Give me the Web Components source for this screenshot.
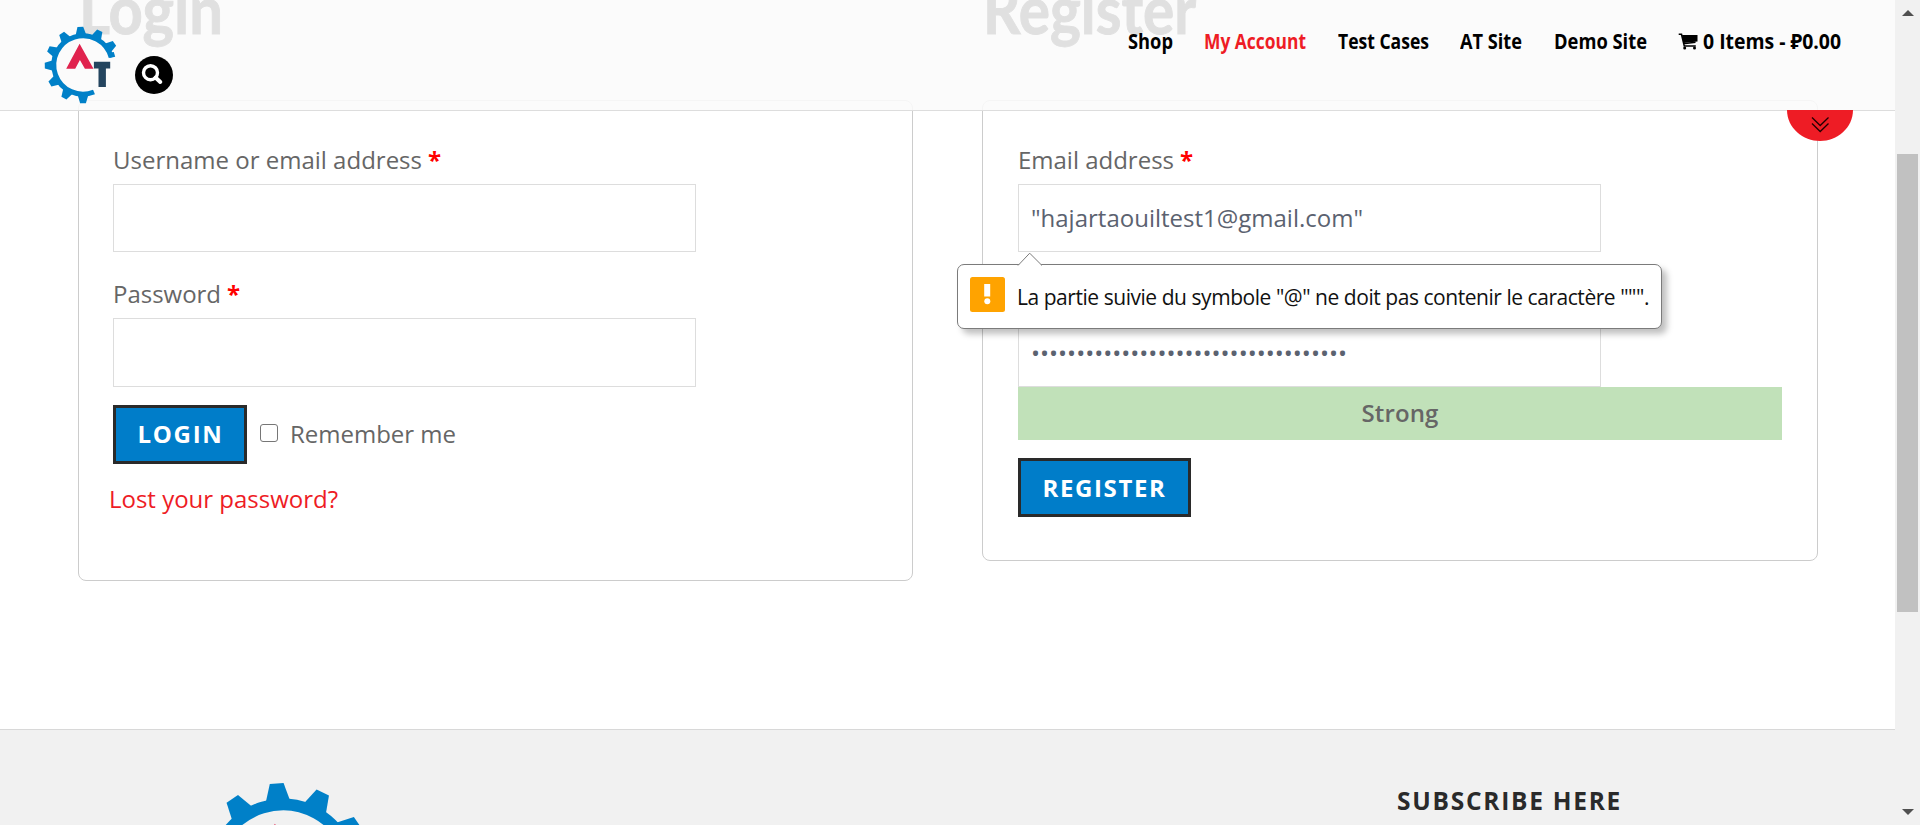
<!DOCTYPE html>
<html lang="en">
<head>
<meta charset="utf-8">
<title>My Account</title>
<style>
html,body{margin:0;height:100%;overflow:hidden;background:#fff}
body{font-family:"Open Sans","Noto Sans",sans-serif;font-size:24px;line-height:40px;color:#666}
</style>
</head>
<body>
<account-page></account-page>
<script>
const define = (name, html, init) => customElements.define(name, class extends HTMLElement {
  connectedCallback() {
    if (this.shadowRoot) return;
    const t = document.createElement('template');
    t.innerHTML = html;
    this.attachShadow({mode: 'open'}).append(t.content.cloneNode(true));
    if (init) init(this, this.shadowRoot);
  }
});

/* One line of text set to a given measure, by tracking or by horizontal scale. */
define('fit-line', `<style>:host{display:inline-block;white-space:nowrap;flex:none}span{display:inline-block;transform-origin:0 50%}</style><span><slot></slot></span>`,
  (el, root) => {
    const span = root.querySelector('span');
    const width = +el.getAttribute('width');
    const natural = span.getBoundingClientRect().width;
    el.style.width = width + 'px';
    if (el.hasAttribute('scale')) span.style.transform = `scaleX(${width / natural})`;
    else span.style.letterSpacing = (width - natural) / el.textContent.length + 'px';
  });

define('gear-logo', `<style>:host{display:block;flex:none}svg{display:block;width:100%;height:100%}</style>
<svg viewBox="-40 -40 80 80"><g id="teeth" fill="#0080c8"></g>
<path d="M28.2 -7.6A29.2 29.2 0 1 0 11 27" fill="none" stroke="#0080c8" stroke-width="5"/>
<path d="M26.5 -7l5.7 -1.3l-1.4 -4.6l-4 .5z" fill="#0080c8"/>
<path d="M-3.4 -21.2L10.5 3.8H1.9L-3.1 -4.9L-7.8 3.8H-16.8z" fill="#e0234e"/>
<path d="M10.9 -3.2H27.2V3.5H22.9V22.1H15.5V3.5H10.9z" fill="#24455f"/></svg>`,
  (el, root) => {
    root.getElementById('teeth').innerHTML = [-94, -64, -34.5, -124, -155, 179, 150, 120, 90]
      .map(a => `<path d="M29 -5.6L38.2 -2.9V2.9L29 5.6z" transform="rotate(${a})"/>`).join('');
  });

define('nav-link', `<style>:host{display:flex;gap:5px;align-items:center;color:#000}:host([active]){color:#ee1c25}</style><slot></slot>`);

define('cart-icon', `<style>:host{display:block;width:20px;height:17px;margin-top:1px}svg{display:block}</style>
<svg width="20" height="17" viewBox="0 0 20 17"><path d="M.7 1.2H3.5L6.3 13H17.8M5.2 10.7L17.5 9.2" fill="none" stroke="#000" stroke-width="1.6"/><path d="M4 2H19.5V8.5L5.4 10z"/><circle cx="6.7" cy="15" r="1.5"/><circle cx="16.5" cy="15" r="1.5"/></svg>`);

define('site-header', `<style>
:host{box-sizing:border-box;display:flex;align-items:flex-start;height:111px;background:rgba(250,250,250,.87);border-bottom:1px solid #ddd;padding:0 54px 0 42.8px}
gear-logo{width:80px;height:80px;margin-top:24.6px}
.search{width:38px;height:38px;margin:56px 0 0 12.2px}
nav{margin-left:auto;display:flex;gap:31.5px;padding-top:21px;font:700 21px/40px "Open Sans","Noto Sans",sans-serif}
.tab{position:absolute;left:1787px;top:110px}
</style>
<gear-logo></gear-logo>
<svg class="search" viewBox="0 0 38 38"><circle cx="19" cy="19" r="19"/><circle cx="15.5" cy="16.7" r="7" fill="none" stroke="#fff" stroke-width="3.4"/><path d="M20.5 21.5L25.3 26" stroke="#fff" stroke-width="4" stroke-linecap="round"/></svg>
<nav><nav-link><fit-line scale width="45">Shop</fit-line></nav-link><nav-link active><fit-line scale width="102">My Account</fit-line></nav-link><nav-link><fit-line scale width="91">Test Cases</fit-line></nav-link><nav-link><fit-line scale width="62">AT Site</fit-line></nav-link><nav-link><fit-line scale width="93">Demo Site</fit-line></nav-link><nav-link><cart-icon></cart-icon><fit-line scale width="138">0 Items - ₽0.00</fit-line></nav-link></nav>
<svg class="tab" width="66" height="31" viewBox="0 0 66 31"><path d="M0 0H66C66 18 50 31 33 31S0 18 0 0z" fill="#ee1c25"/><path d="M25 7.5L33.2 15.5L41.5 7.5M25 13.5L33.2 21.5L41.5 13.5" fill="none" stroke="#200" stroke-width="1.3"/></svg>`);

define('form-card', `<style>:host{box-sizing:border-box;display:block;border:1px solid #ccc;border-radius:8px;padding:39px 34px 0}</style><slot></slot>`);

define('form-field', `<style>
:host{display:block;position:relative}
.label{display:flex;gap:6px;height:44px}
b{color:red}
.box{box-sizing:border-box;width:583px;height:var(--h,68px);border:1px solid #ddd;padding:0 12px;display:flex;align-items:center;color:#5b6270}
</style><div class="label"><slot name="label"></slot><b>*</b></div><div class="box"><slot></slot></div><slot name="tip"></slot>`);

define('form-button', `<style>:host{box-sizing:border-box;display:flex;align-items:center;padding-left:21.5px;height:59px;border:3px solid #2a2a2a;background:#007dc9;color:#fff;font-weight:700}</style><slot></slot>`);

define('error-tip', `<style>
:host{box-sizing:border-box;position:absolute;left:-61px;top:124px;width:705px;height:65px;border:1px solid #7b7b7b;border-radius:7px;background:#fff;box-shadow:5px 5px 6px rgba(0,0,0,.25);display:flex;align-items:center;padding:0 12px;gap:12px;color:#111;font-size:21px;z-index:2}
.notch{position:absolute;left:59px;top:-13px}
.bang{flex:none;margin-top:-5px}
fit-line{margin-top:1px}
</style><svg class="notch" width="26" height="14"><path d="M1 13.5L12.7 1.2L25 13.5" fill="#fff" stroke="#7b7b7b"/></svg>
<svg class="bang" width="35" height="35"><rect width="35" height="35" rx="2.5" fill="#ffa300"/><rect x="14.2" y="7" width="6" height="12.5" fill="#fff"/><circle cx="17.3" cy="24.3" r="3" fill="#fff"/></svg><slot></slot>`);

define('site-footer', `<style>
:host{box-sizing:border-box;display:flex;justify-content:space-between;align-items:flex-start;height:96px;overflow:hidden;background:#f1f1f1;border-top:1px solid #d8d8d8;padding:49px 273px 0 187.5px}
gear-logo{width:190px;height:190px}
.t{margin-top:2px;color:#2a2a2a;font-weight:700;font-size:24.5px}
</style><gear-logo></gear-logo><div class="t"><fit-line width="225">SUBSCRIBE HERE</fit-line></div>`);

define('scroll-bar', `<style>
:host{display:flex;flex-direction:column;align-items:center;background:#f1f1f1;height:825px}
.thumb{width:21px;height:458px;background:#c1c1c1;margin:138px 0 197px}
svg{display:block;fill:#505050;flex:none}
.up{margin-top:10px}
</style><svg class="up" width="12" height="6"><path d="M0 6L6 0L12 6z"/></svg><div class="thumb"></div><svg width="12" height="6"><path d="M0 0L6 6L12 0z"/></svg>`);

define('account-page', `<style>
:host{display:grid;grid-template-columns:1895px 25px;height:825px;overflow:hidden}
.view{position:relative;display:flex;flex-direction:column;height:825px;overflow:hidden}
site-header{position:absolute;top:0;left:0;width:1895px;z-index:1}
.cols{display:flex;gap:69px;align-items:flex-start;padding-left:78px;height:729px;box-sizing:border-box}
.col{width:835px;flex:none}
.col+.col{width:836px}
h2{margin:-31px 0 0 1px;height:131px;font:700 66px/80px Lato,sans-serif;color:#333;-webkit-text-stroke:1px #333}
.l{height:481px}.r{height:461px;padding-left:35px}
.second{margin-top:22px;--h:69px}
.row{display:flex;align-items:center;margin-top:18px}
.check{box-sizing:border-box;width:18px;height:18px;border:1.5px solid #767676;border-radius:3px;margin:-3px 12px 0 13px}
.row>fit-line{margin-top:-2px}
.l form-button fit-line{margin-top:-2px}
.lost{margin:15px 0 0 -4px;color:#ee1c25}
.strong{height:53px;background:#c1e1b9;font-weight:600;width:764px;display:flex;justify-content:center;align-items:center}
.strong fit-line{margin-top:-2px}
</style>
<div class="view"><site-header></site-header>
<div class="cols">
<div class="col"><h2><fit-line scale width="144">Login</fit-line></h2>
<form-card class="l">
<form-field><fit-line slot="label" width="309">Username or email address</fit-line></form-field>
<form-field class="second"><fit-line slot="label" width="108">Password</fit-line></form-field>
<div class="row"><form-button style="width:134px"><fit-line width="86">LOGIN</fit-line></form-button><span class="check"></span><fit-line width="166">Remember me</fit-line></div>
<div class="lost"><fit-line width="229">Lost your password?</fit-line></div>
</form-card></div>
<div class="col"><h2><fit-line scale width="213">Register</fit-line></h2>
<form-card class="r">
<form-field><fit-line slot="label" width="156">Email address</fit-line><fit-line width="332">"hajartaouiltest1@gmail.com"</fit-line><error-tip slot="tip"><fit-line width="632">La partie suivie du symbole "@" ne doit pas contenir le caractère """.</fit-line></error-tip></form-field>
<form-field class="second"><fit-line slot="label" width="108">Password</fit-line><fit-line width="316">•••••••••••••••••••••••••••••••••••</fit-line></form-field>
<div class="strong"><fit-line width="77">Strong</fit-line></div>
<div class="row"><form-button style="width:173px"><fit-line width="124">REGISTER</fit-line></form-button></div>
</form-card></div>
</div>
<site-footer></site-footer>
</div>
<scroll-bar></scroll-bar>`);
</script>
</body>
</html>
